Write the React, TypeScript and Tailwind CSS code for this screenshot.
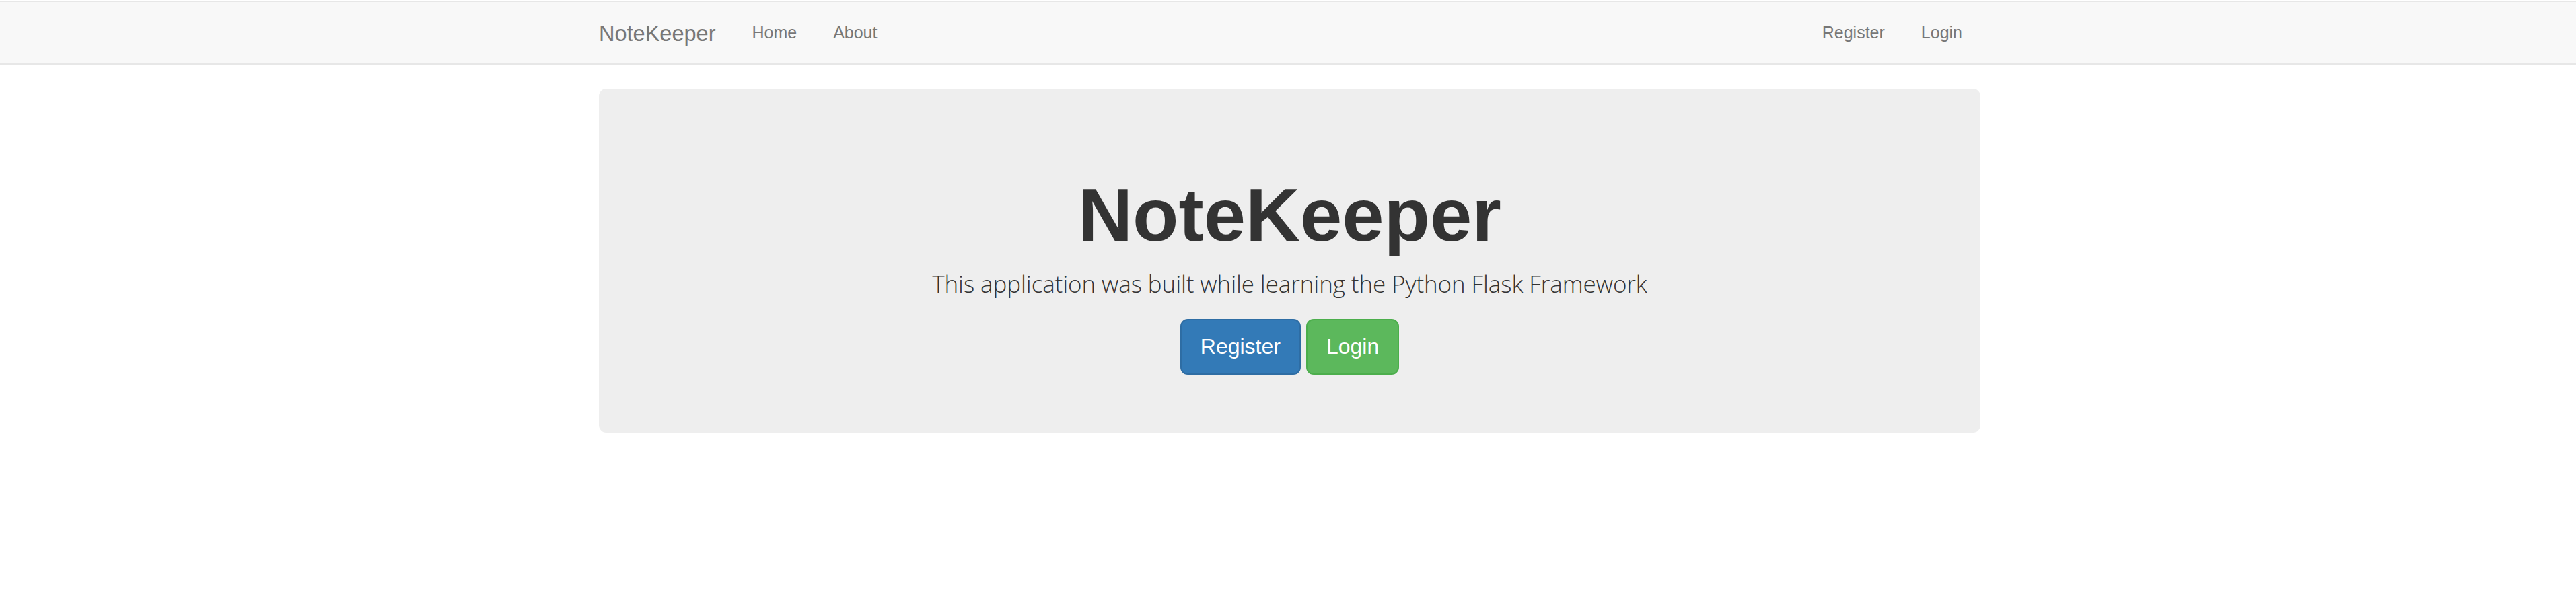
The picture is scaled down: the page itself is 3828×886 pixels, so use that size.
import React from 'react';

const App = () => {
  return (
    <div className="min-h-screen bg-white pt-px font-['Liberation_Sans',Arial,sans-serif]">
      <nav className="border-y-2 border-[#e7e7e7] bg-[#f8f8f8]">
        <div className="ml-[890px] flex h-[91px] w-[2053px] items-center justify-between">
          <div className="flex items-center">
            <a href="#" className="mt-[3px] pr-[27px] text-[32.5px] leading-[46px] text-[#777]">NoteKeeper</a>
            <a href="#" className="-mt-[2px] px-[27px] text-[25px] leading-[36px] text-[#777]">Home</a>
            <a href="#" className="-mt-[2px] px-[27px] text-[25px] leading-[36px] text-[#777]">About</a>
          </div>
          <div className="flex items-center">
            <a href="#" className="-mt-[2px] px-[27px] text-[25px] leading-[36px] text-[#777]">Register</a>
            <a href="#" className="-mt-[2px] px-[27px] text-[25px] leading-[36px] text-[#777]">Login</a>
          </div>
        </div>
      </nav>

      <div className="ml-[890px] mt-[36px] w-[2053px]">
        <div className="flex flex-col items-center rounded-[11px] bg-[#eeeeee] pt-[126px] pb-[86px] text-center text-[#333]">
          <h1 className="text-[112px] font-bold leading-[123px]">NoteKeeper</h1>
          <p className="mt-[14px] font-['Open_Sans',sans-serif] text-[35px] font-light leading-[54px] tracking-[-0.1px]">
            This application was built while learning the Python Flask Framework
          </p>
          <div className="mt-[25px] flex gap-[8px]">
            <a href="#" className="rounded-[11px] border-2 border-[#2e6da4] bg-[#337ab7] px-[28px] py-[18px] text-[32px] leading-[43px] text-white">Register</a>
            <a href="#" className="rounded-[11px] border-2 border-[#4cae4c] bg-[#5cb85c] px-[28px] py-[18px] text-[32px] leading-[43px] text-white">Login</a>
          </div>
        </div>
      </div>
    </div>
  );
};

export default App;
